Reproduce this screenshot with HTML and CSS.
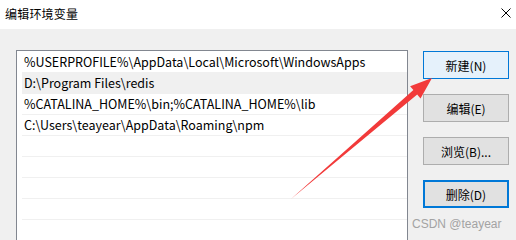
FILE: index.html
```html
<!DOCTYPE html>
<html lang="zh-CN">
<head>
<meta charset="utf-8">
<title>编辑环境变量</title>
<link rel="stylesheet" href="styles.css">
</head>
<body>
<div class="dialog">
  <div class="titlebar">
    <span class="title">编辑环境变量</span>
    <svg class="close" width="10" height="10" viewBox="0 0 10 10"><path d="M0.5 0.5 L9.5 9.5 M9.5 0.5 L0.5 9.5" stroke="#000" stroke-width="1" fill="none"/></svg>
  </div>
  <div class="content">
    <div class="list">
      <div class="row">%USERPROFILE%\AppData\Local\Microsoft\WindowsApps</div>
      <div class="row selected">D:\Program Files\redis</div>
      <div class="row">%CATALINA_HOME%\bin;%CATALINA_HOME%\lib</div>
      <div class="row">C:\Users\teayear\AppData\Roaming\npm</div>
      <div class="row"></div>
      <div class="row"></div>
      <div class="row"></div>
      <div class="row"></div>
    </div>
    <div class="buttons">
      <button class="btn hover">新建(N)</button>
      <button class="btn">编辑(E)</button>
      <button class="btn">浏览(B)...</button>
      <button class="btn default">删除(D)</button>
    </div>
  </div>
  <div class="watermark">CSDN @teayear</div>
  <svg class="arrow" width="516" height="240" viewBox="0 0 516 240">
    <polygon points="291,199 417.2,94.6 420.5,98.4 432,78 410.1,86.2 413.4,90" fill="#f23a3a"/>
  </svg>
</div>
</body>
</html>
```
FILE: styles.css
```css
html, body {
  margin: 0;
  padding: 0;
  width: 516px;
  height: 240px;
  overflow: hidden;
  background: #f0f0f0;
  font-family: "Noto Sans CJK SC", "Noto Sans", sans-serif;
  font-size: 12px;
  color: #000;
}
.dialog {
  position: relative;
  width: 516px;
  height: 240px;
}
.titlebar {
  height: 29px;
  background: #fff;
  display: flex;
  align-items: center;
  justify-content: space-between;
  padding: 0 5px 2px 5px;
  box-sizing: border-box;
}
.title {
  font-size: 12px;
  letter-spacing: 0.2px;
}
.close {
  display: block;
  margin-top: -2px;
}
.content {
  display: flex;
  padding: 21px 0 0 16px;
  gap: 15px;
}
.list {
  width: 392px;
  height: 190px;
  box-sizing: border-box;
  border: 1px solid #828790;
  border-bottom: none;
  background: #fff;
  padding-top: 1px;
  overflow: hidden;
}
.row {
  height: 20px;
  line-height: 20px;
  border-bottom: 1px solid #f0f0f0;
  padding-left: 2px;
  margin-left: 5px;
  white-space: nowrap;
  overflow: hidden;
  font-size: 12.5px;
}
.row.selected {
  background: #f0f0f0;
}
.buttons {
  display: flex;
  flex-direction: column;
  gap: 15px;
  padding-top: 1px;
}
.btn {
  width: 86px;
  height: 28px;
  box-sizing: border-box;
  background: #e1e1e1;
  border: 1px solid #adadad;
  font-family: inherit;
  font-size: 12px;
  color: #000;
  padding: 0;
  margin: 0;
}
.btn.hover {
  background: #e5f1fb;
  border-color: #0078d7;
}
.btn.default {
  border: 2px solid #0078d7;
}
.watermark {
  position: absolute;
  left: 412px;
  top: 217px;
  font-family: "Liberation Sans", Arial, sans-serif;
  font-size: 12px;
  color: #a3a3a3;
}
.arrow {
  position: absolute;
  left: 0;
  top: 0;
}
```
